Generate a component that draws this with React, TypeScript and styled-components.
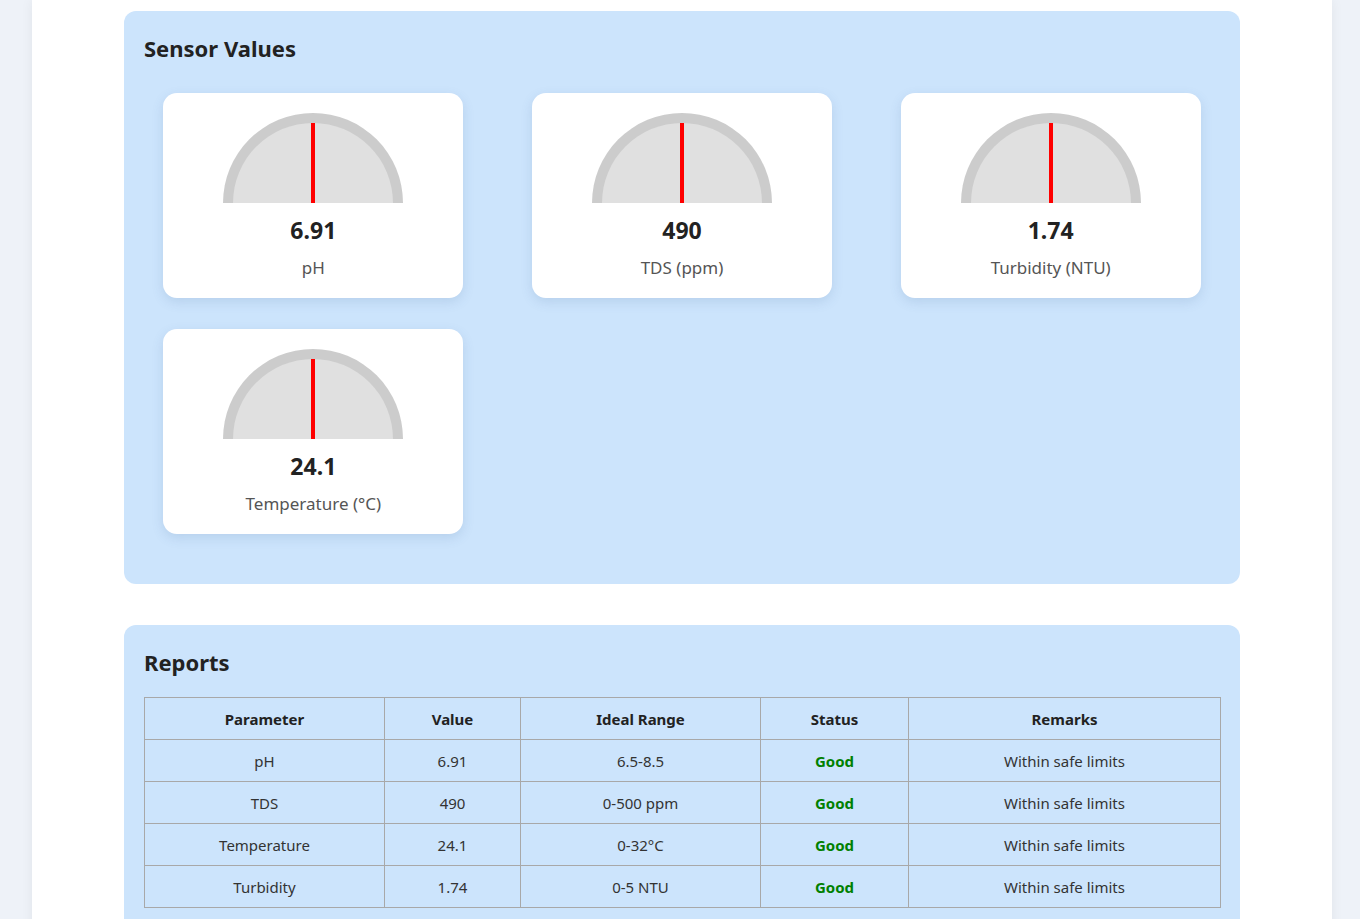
import styled, { createGlobalStyle } from "styled-components";

const GlobalStyle = createGlobalStyle`
  html, body {
    margin: 0;
    padding: 0;
    background: #eef2f8;
    font-family: "Segoe UI", "Noto Sans", "Open Sans", sans-serif;
    color: #222;
  }
`;

const Page = styled.div`
  width: 1300px;
  min-height: 960px;
  margin: 0 0 0 32px;
  padding: 11px 92px 40px;
  box-sizing: border-box;
  background: #fff;
  box-shadow: 0 0 12px rgba(0, 0, 0, 0.06);
  display: flex;
  flex-direction: column;
  gap: 41px;
`;

const Section = styled.section`
  background: #cce4fc;
  border-radius: 12px;
  padding: 20px 20px 50px;
`;

const Title = styled.h2<{ $gap: number }>`
  margin: 0 0 ${(p) => p.$gap}px;
  font-size: 22px;
  line-height: 34px;
  font-weight: 700;
  color: #222;
`;

const Grid = styled.div`
  display: grid;
  grid-template-columns: repeat(3, 1fr);
  gap: 31px 30px;
  justify-items: center;
`;

const Card = styled.div`
  width: 300px;
  height: 205px;
  box-sizing: border-box;
  background: #fff;
  border-radius: 14px;
  box-shadow: 0 4px 12px rgba(60, 100, 150, 0.15);
  padding-top: 20px;
  display: flex;
  flex-direction: column;
  align-items: center;
`;

const Value = styled.div`
  margin-top: 13px;
  font-size: 23px;
  line-height: 28px;
  font-weight: 700;
  color: #222;
`;

const Label = styled.div`
  margin-top: 12px;
  font-size: 17px;
  line-height: 24px;
  color: #555;
`;

const Table = styled.table`
  width: 100%;
  border-collapse: collapse;
  table-layout: fixed;
  font-size: 15px;
  color: #333;
`;

const Th = styled.th`
  height: 41px;
  padding: 0 10px;
  border: 1px solid #a8a8a8;
  font-weight: 700;
  color: #222;
  text-align: center;
`;

const Td = styled.td<{ $good?: boolean }>`
  height: 41px;
  padding: 0 10px;
  border: 1px solid #a8a8a8;
  text-align: center;
  font-weight: ${(p) => (p.$good ? 700 : 400)};
  color: ${(p) => (p.$good ? "#008000" : "#333")};
`;

function Gauge() {
  return (
    <svg width="180" height="90" viewBox="0 0 180 90">
      <path d="M0 90 A90 90 0 0 1 180 90 Z" fill="#cccccc" />
      <path d="M10 90 A80 80 0 0 1 170 90 Z" fill="#e0e0e0" />
      <rect x="88" y="10" width="4" height="80" fill="#ff0000" />
    </svg>
  );
}

const sensors = [
  { value: "6.91", label: "pH" },
  { value: "490", label: "TDS (ppm)" },
  { value: "1.74", label: "Turbidity (NTU)" },
  { value: "24.1", label: "Temperature (°C)" },
];

const rows = [
  ["pH", "6.91", "6.5-8.5"],
  ["TDS", "490", "0-500 ppm"],
  ["Temperature", "24.1", "0-32°C"],
  ["Turbidity", "1.74", "0-5 NTU"],
];

export default function App() {
  return (
    <>
      <GlobalStyle />
      <Page>
        <Section>
          <Title $gap={28}>Sensor Values</Title>
          <Grid>
            {sensors.map((s) => (
              <Card key={s.label}>
                <Gauge />
                <Value>{s.value}</Value>
                <Label>{s.label}</Label>
              </Card>
            ))}
          </Grid>
        </Section>
        <Section>
          <Title $gap={18}>Reports</Title>
          <Table>
            <colgroup>
              <col style={{ width: 240 }} />
              <col style={{ width: 136 }} />
              <col style={{ width: 240 }} />
              <col style={{ width: 148 }} />
              <col style={{ width: 312 }} />
            </colgroup>
            <thead>
              <tr>
                <Th>Parameter</Th>
                <Th>Value</Th>
                <Th>Ideal Range</Th>
                <Th>Status</Th>
                <Th>Remarks</Th>
              </tr>
            </thead>
            <tbody>
              {rows.map(([name, value, range]) => (
                <tr key={name}>
                  <Td>{name}</Td>
                  <Td>{value}</Td>
                  <Td>{range}</Td>
                  <Td $good>Good</Td>
                  <Td>Within safe limits</Td>
                </tr>
              ))}
            </tbody>
          </Table>
        </Section>
      </Page>
    </>
  );
}
